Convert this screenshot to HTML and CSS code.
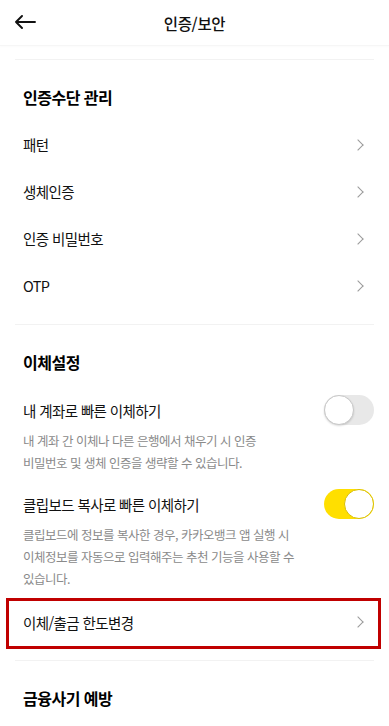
FILE: index.html
```html
<!DOCTYPE html>
<html lang="ko">
<head>
    <meta charset="UTF-8">
    <meta name="viewport" content="width=device-width, initial-scale=1.0">
    <title>인증/보안</title>
    <link rel="stylesheet" href="styles.css">
</head>
<body>

<header class="top-bar">
    <button class="back-button" aria-label="뒤로">
        <svg width="22" height="14" viewBox="0 0 22 14">
            <path d="M21 7H2M8 1L2 7l6 6" fill="none" stroke="#111" stroke-width="1.9" stroke-linecap="round" stroke-linejoin="round"/>
        </svg>
    </button>
    <h1 class="top-title">인증/보안</h1>
</header>

<section class="section">
    <h2 class="section-title">인증수단 관리</h2>
    <a class="menu-item" href="#"><span>패턴</span><i class="chevron"></i></a>
    <a class="menu-item" href="#"><span>생체인증</span><i class="chevron"></i></a>
    <a class="menu-item" href="#"><span>인증 비밀번호</span><i class="chevron"></i></a>
    <a class="menu-item" href="#"><span>OTP</span><i class="chevron"></i></a>
</section>

<section class="section section-transfer">
    <h2 class="section-title">이체설정</h2>

    <div class="toggle-item">
        <div class="toggle-row">
            <span>내 계좌로 빠른 이체하기</span>
            <span class="switch"></span>
        </div>
        <p class="toggle-desc">내 계좌 간 이체나 다른 은행에서 채우기 시 인증 비밀번호 및 생체 인증을 생략할 수 있습니다.</p>
    </div>

    <div class="toggle-item">
        <div class="toggle-row">
            <span>클립보드 복사로 빠른 이체하기</span>
            <span class="switch on"></span>
        </div>
        <p class="toggle-desc">클립보드에 정보를 복사한 경우, 카카오뱅크 앱 실행 시 이체정보를 자동으로 입력해주는 추천 기능을 사용할 수 있습니다.</p>
    </div>

    <a class="menu-item highlight" href="#"><span>이체/출금 한도변경</span><i class="chevron"></i></a>
</section>

<section class="section">
    <h2 class="section-title">금융사기 예방</h2>
</section>

</body>
</html>
```

FILE: styles.css
```css
body {
    margin: 0;
    font-family: "Noto Sans CJK KR", "Noto Sans", sans-serif;
    background-color: #fff;
    color: #111;
    width: 389px;
    overflow: hidden;
}

/* Top bar */
.top-bar {
    position: relative;
    height: 45px;
    display: flex;
    align-items: center;
    justify-content: center;
    border-bottom: 1px solid #f6f6f6;
    box-shadow: 0 1px 2px rgba(0, 0, 0, 0.02);
}

.back-button {
    position: absolute;
    left: 14px;
    top: 15px;
    padding: 0;
    border: none;
    background: none;
    display: flex;
}

.top-title {
    margin: 0;
    font-size: 15.5px;
    font-weight: 500;
    letter-spacing: -0.3px;
    line-height: 24px;
}

/* Sections */
.section {
    margin: 13px 15px 0;
    padding: 13px 0 15px;
    border-top: 1px solid #f2f2f2;
}

.section + .section {
    margin-top: 0;
}

.section-transfer {
    padding-bottom: 13px;
}

.section-title {
    margin: 0;
    height: 48px;
    display: flex;
    align-items: center;
    padding: 0 8px;
    font-size: 16px;
    font-weight: 700;
    letter-spacing: -0.5px;
    color: #000;
}

.menu-item {
    height: 47px;
    display: flex;
    align-items: center;
    justify-content: space-between;
    padding: 0 8px;
    font-size: 14.5px;
    letter-spacing: -0.6px;
    color: #111;
    text-decoration: none;
}

.chevron {
    width: 7px;
    height: 7px;
    margin-right: 4px;
    border-top: 1.2px solid #9a9a9a;
    border-right: 1.2px solid #9a9a9a;
    transform: rotate(45deg);
}

/* Toggle rows */
.toggle-item {
    padding: 9px 0 7px 8px;
}

.toggle-item + .toggle-item {
    padding-top: 8px;
}

.toggle-row {
    display: flex;
    align-items: center;
    justify-content: space-between;
    height: 30px;
    font-size: 14.5px;
    letter-spacing: -0.6px;
}

.toggle-desc {
    margin: 5px 0 0;
    width: 272px;
    font-size: 12.5px;
    line-height: 22px;
    letter-spacing: -0.5px;
    color: #8a8a8a;
    word-break: keep-all;
}

.switch {
    position: relative;
    width: 50px;
    height: 30px;
    border-radius: 15px;
    background-color: #e8e8e8;
    flex-shrink: 0;
}

.switch::after {
    content: "";
    position: absolute;
    left: 0;
    top: 0;
    width: 28px;
    height: 28px;
    border-radius: 50%;
    background-color: #fff;
    border: 1px solid #c8c8c8;
    box-shadow: 0 1px 2px rgba(0, 0, 0, 0.15);
}

.switch.on {
    background-color: #ffdf00;
}

.switch.on::after {
    left: auto;
    right: 0;
    border-color: #d9bf00;
    box-shadow: none;
}

/* Link row with annotation box */
.section-transfer .menu-item {
    height: 50px;
}

.highlight {
    position: relative;
}

.highlight::after {
    content: "";
    position: absolute;
    top: 1px;
    bottom: -2px;
    left: -9px;
    right: -7px;
    border: 3px solid #c00000;
}
```
